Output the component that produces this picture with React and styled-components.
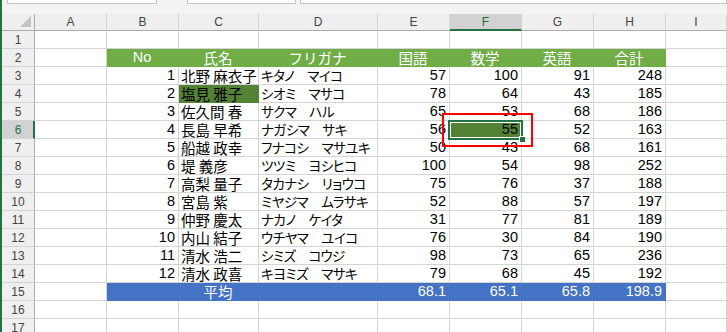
import React from "react";
import styled, { createGlobalStyle, css } from "styled-components";

const GRID = "#d4d4d4";
const HEAD_BG = "#efefef";
const EXCEL_GREEN = "#217346";
const JP = `"Noto Sans CJK JP", "Liberation Sans", sans-serif`;
const NUM = `"Liberation Sans", Arial, sans-serif`;

const GlobalStyle = createGlobalStyle`
  html, body { margin: 0; padding: 0; background: #ffffff; overflow: hidden; }
  * { box-sizing: border-box; }
`;

const Window = styled.div`
  width: 727px;
  height: 332px;
  border-left: 2px solid ${EXCEL_GREEN};
  display: flex;
  flex-direction: column;
  overflow: hidden;
  background: #ffffff;
`;

/* formula bar strip, only its lower edge is visible */
const FormulaStrip = styled.div`
  height: 14px;
  flex: none;
  display: flex;
  align-items: flex-start;
  background: #f3f3f3;
  padding-left: 5px;
`;

const StripBox = styled.div`
  height: 4px;
  width: ${(p) => p.$w || "auto"};
  flex: ${(p) => (p.$grow ? 1 : "none")};
  margin-left: ${(p) => p.$ml || "0"};
  background: #ffffff;
  border: 1px solid #c6c6c6;
  border-top: none;
  overflow: hidden;
`;

const Sheet = styled.div`
  display: grid;
  grid-template-columns: 33px 72px 72px 80px 119px 72px 72px 72px 72px 1fr;
  grid-template-rows: 17px;
  grid-auto-rows: 18px;
`;

const Corner = styled.div`
  background: ${HEAD_BG};
  border-right: 1px solid #ababab;
  border-bottom: 1px solid #ababab;
  display: flex;
  align-items: flex-end;
  justify-content: flex-end;
  padding: 0 3px 3px 0;
`;

const CornerTriangle = styled.div`
  width: 0;
  height: 0;
  border-left: 11px solid transparent;
  border-bottom: 11px solid #c4c4c4;
`;

const ColHeader = styled.div`
  background: ${(p) => (p.$active ? "#d2d2d2" : HEAD_BG)};
  border-right: 1px solid ${GRID};
  border-bottom: ${(p) => (p.$active ? `2px solid ${EXCEL_GREEN}` : "1px solid #ababab")};
  color: ${(p) => (p.$active ? EXCEL_GREEN : "#444444")};
  font-family: ${NUM};
  font-size: 12px;
  display: flex;
  align-items: center;
  justify-content: center;
  padding-top: ${(p) => (p.$active ? "1px" : "0")};
`;

const RowHeader = styled.div`
  background: ${(p) => (p.$active ? "#d2d2d2" : HEAD_BG)};
  border-right: ${(p) => (p.$active ? `2px solid ${EXCEL_GREEN}` : "1px solid #ababab")};
  border-bottom: 1px solid ${GRID};
  color: ${(p) => (p.$active ? EXCEL_GREEN : "#444444")};
  font-family: ${NUM};
  font-size: 12px;
  display: flex;
  align-items: center;
  justify-content: center;
  padding-left: ${(p) => (p.$active ? "1px" : "0")};
`;

const Cell = styled.div`
  border-right: 1px solid ${(p) => p.$fill || GRID};
  border-bottom: 1px solid ${(p) => p.$fill || GRID};
  background: ${(p) => p.$fill || "transparent"};
  color: ${(p) => p.$ink || "#000000"};
  font-family: ${(p) => (p.$num ? NUM : JP)};
  font-size: 14.5px;
  line-height: 17px;
  white-space: nowrap;
  display: flex;
  align-items: flex-end;
  padding: 0 3px 0 2px;
  justify-content: ${(p) =>
    p.$align === "right" ? "flex-end" : p.$align === "center" ? "center" : "flex-start"};
  ${(p) =>
    p.$kana &&
    css`
      font-size: 13.5px;
      letter-spacing: -0.5px;
      font-feature-settings: "palt";
    `}
  ${(p) =>
    p.$overlay &&
    css`
      position: relative;
      z-index: 2;
    `}
`;

/* active cell frame with its fill handle */
const SelectionFrame = styled.div`
  position: absolute;
  left: -2px;
  top: -1px;
  width: 75px;
  height: 20px;
  border: 2px solid ${EXCEL_GREEN};
  pointer-events: none;
  &::before {
    content: "";
    position: absolute;
    inset: 0;
    border: 1px solid #ffffff;
  }
`;

const FillHandle = styled.div`
  position: absolute;
  right: -5px;
  bottom: -5px;
  width: 7px;
  height: 7px;
  background: ${EXCEL_GREEN};
  border: 1px solid #ffffff;
`;

/* red callout box drawn over E6:F6 */
const Callout = styled.div`
  position: absolute;
  left: -8px;
  top: -8px;
  width: 91px;
  height: 34px;
  border: 2px solid #ff0000;
  pointer-events: none;
`;

const CellText = styled.span`
  position: relative;
`;

const COLS = ["A", "B", "C", "D", "E", "F", "G", "H", "I"];

const students = [
  [1, "北野 麻衣子", "キタノ　マイコ", 57, 100, 91, 248],
  [2, "塩見 雅子", "シオミ　マサコ", 78, 64, 43, 185],
  [3, "佐久間 春", "サクマ　ハル", 65, 53, 68, 186],
  [4, "長島 早希", "ナガシマ　サキ", 56, 55, 52, 163],
  [5, "船越 政幸", "フナコシ　マサユキ", 50, 43, 68, 161],
  [6, "堤 義彦", "ツツミ　ヨシヒコ", 100, 54, 98, 252],
  [7, "高梨 量子", "タカナシ　リョウコ", 75, 76, 37, 188],
  [8, "宮島 紫", "ミヤジマ　ムラサキ", 52, 88, 57, 197],
  [9, "仲野 慶太", "ナカノ　ケイタ", 31, 77, 81, 189],
  [10, "内山 結子", "ウチヤマ　ユイコ", 76, 30, 84, 190],
  [11, "清水 浩二", "シミズ　コウジ", 98, 73, 65, 236],
  [12, "清水 政喜", "キヨミズ　マサキ", 79, 68, 45, 192],
];

const headings = ["No", "氏名", "フリガナ", "国語", "数学", "英語", "合計"];
const averages = ["68.1", "65.1", "65.8", "198.9"];

const HEAD_GREEN = "#70ad47";
const DARK_GREEN = "#548235";
const BLUE = "#4472c4";

export default function App() {
  const rows = [];

  // row 1: empty
  rows.push(
    <React.Fragment key="r1">
      <RowHeader>1</RowHeader>
      {COLS.map((c) => (
        <Cell key={c} />
      ))}
    </React.Fragment>
  );

  // row 2: table headings
  rows.push(
    <React.Fragment key="r2">
      <RowHeader>2</RowHeader>
      <Cell />
      {headings.map((h) => (
        <Cell key={h} $fill={HEAD_GREEN} $ink="#ffffff" $align="center" $num={h === "No"}>
          {h}
        </Cell>
      ))}
      <Cell />
    </React.Fragment>
  );

  students.forEach((s, i) => {
    const r = i + 3;
    const [no, name, kana, ja, ma, en, total] = s;
    const active = r === 6;
    rows.push(
      <React.Fragment key={`r${r}`}>
        <RowHeader $active={active}>{r}</RowHeader>
        <Cell />
        <Cell $num $align="right">{no}</Cell>
        <Cell $fill={r === 4 ? DARK_GREEN : undefined}>{name}</Cell>
        <Cell $kana>{kana}</Cell>
        <Cell $num $align="right">{ja}</Cell>
        <Cell $num $align="right" $fill={active ? DARK_GREEN : undefined} $overlay={active}>
          {active && <Callout />}
          <CellText>{ma}</CellText>
          {active && (
            <SelectionFrame>
              <FillHandle />
            </SelectionFrame>
          )}
        </Cell>
        <Cell $num $align="right">{en}</Cell>
        <Cell $num $align="right">{total}</Cell>
        <Cell />
      </React.Fragment>
    );
  });

  // row 15: averages
  rows.push(
    <React.Fragment key="r15">
      <RowHeader>15</RowHeader>
      <Cell />
      <Cell $fill={BLUE} />
      <Cell $fill={BLUE} $ink="#ffffff" $align="center">平均</Cell>
      <Cell $fill={BLUE} />
      {averages.map((a) => (
        <Cell key={a} $fill={BLUE} $ink="#ffffff" $num $align="right">
          {a}
        </Cell>
      ))}
      <Cell />
    </React.Fragment>
  );

  [16, 17].forEach((r) => {
    rows.push(
      <React.Fragment key={`r${r}`}>
        <RowHeader>{r}</RowHeader>
        {COLS.map((c) => (
          <Cell key={c} />
        ))}
      </React.Fragment>
    );
  });

  return (
    <>
      <GlobalStyle />
      <Window>
        <FormulaStrip>
          <StripBox $w="150px" />
          <StripBox $w="109px" $ml="30px" />
          <StripBox $grow $ml="4px" />
        </FormulaStrip>
        <Sheet>
          <Corner>
            <CornerTriangle />
          </Corner>
          {COLS.map((c) => (
            <ColHeader key={c} $active={c === "F"}>
              {c}
            </ColHeader>
          ))}
          {rows}
        </Sheet>
      </Window>
    </>
  );
}
